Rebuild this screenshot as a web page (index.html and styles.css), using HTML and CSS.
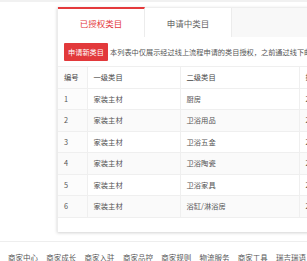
FILE: index.html
```html
<!DOCTYPE html>
<html>
<head>
<meta charset="utf-8">
<link rel="stylesheet" href="styles.css">
</head>
<body>
<div class="topband"></div>
<div class="panel">
  <div class="tabs">
    <div class="tab active">已授权类目</div>
    <div class="tab">申请中类目</div>
    <div class="tab-rest"></div>
  </div>
  <div class="toolbar">
    <span class="btn">申请新类目</span>
    <span class="note">本列表中仅展示经过线上流程申请的类目授权，之前通过线下邮寄资料申请的类目授权请联系招商</span>
  </div>
  <table class="grid">
    <colgroup><col class="c1"><col class="c2"><col class="c3"><col class="c4"></colgroup>
    <thead>
      <tr><th>编号</th><th>一级类目</th><th>二级类目</th><th>授权时间</th></tr>
    </thead>
    <tbody>
      <tr><td>1</td><td>家装主材</td><td>厨房</td><td>2016-06-01</td></tr>
      <tr><td>2</td><td>家装主材</td><td>卫浴用品</td><td>2016-06-01</td></tr>
      <tr><td>3</td><td>家装主材</td><td>卫浴五金</td><td>2016-06-01</td></tr>
      <tr><td>4</td><td>家装主材</td><td>卫浴陶瓷</td><td>2016-06-01</td></tr>
      <tr><td>5</td><td>家装主材</td><td>卫浴家具</td><td>2016-06-01</td></tr>
      <tr><td>6</td><td>家装主材</td><td>浴缸/淋浴房</td><td>2016-06-01</td></tr>
    </tbody>
  </table>
  <div class="panel-foot"></div>
</div>
<div class="footer">
  <span>商家中心</span><span>商家成长</span><span>商家入驻</span><span>商家品控</span><span>商家规则</span><span>物流服务</span><span>商家工具</span><span>瑞吉瑞语</span>
</div>
</body>
</html>
```

FILE: styles.css
```css
html, body {
  margin: 0;
  padding: 0;
  background: #fff;
  overflow: hidden;
  width: 307px;
  height: 261px;
  font-family: "Noto Sans CJK SC", "Noto Sans", sans-serif;
}
.topband {
  height: 2px;
  background: #f1f1f1;
}
.panel {
  margin: 5px 0 0 57px;
  width: 320px;
  background: #fff;
  border-left: 1px solid #ececec;
  box-shadow: 0 1px 3px rgba(0,0,0,0.18);
}
.tabs {
  display: flex;
  height: 29px;
  background: #f8f8f8;
  border-top: 1px solid #eee;
}
.tab {
  width: 87px;
  display: flex;
  align-items: center;
  justify-content: center;
  background: #fff;
  font-size: 8.5px;
  color: #666;
  border-right: 1px solid #ececec;
  box-sizing: border-box;
}
.tab.active {
  color: #e4393c;
  border-top: 2px solid #e4393c;
  margin-top: -1px;
}
.tab-rest { flex: 1; }
.toolbar {
  display: flex;
  align-items: center;
  gap: 2px;
  padding: 6px 0 0 6px;
  height: 18px;
  white-space: nowrap;
  overflow: hidden;
}
.btn {
  display: inline-flex;
  align-items: center;
  justify-content: center;
  width: 44px;
  height: 18px;
  background: #e2393b;
  color: #fff;
  font-size: 7.2px;
  border-radius: 1px;
  flex: none;
}
.note {
  font-size: 7.2px;
  color: #555;
}
.grid {
  margin-top: 5px;
  border-collapse: collapse;
  table-layout: fixed;
  width: 320px;
  font-size: 7.3px;
  color: #555;
}
.c1 { width: 29px; }
.c2 { width: 93px; }
.c3 { width: 119px; }
.c4 { width: 79px; }
.grid th, .grid td {
  height: 21.5px;
  padding: 0 0 0 6px;
  text-align: left;
  font-weight: normal;
  border-top: 1px solid #efefef;
  border-bottom: 1px solid #efefef;
  border-right: 1px solid #efefef;
  white-space: nowrap;
  overflow: hidden;
  box-sizing: border-box;
}
.grid th { color: #444; }
.grid tbody tr:nth-child(even) td { background: #fafafa; }
.grid td:first-child, .grid th:first-child { background: #fcfcfc; }
.panel-foot { height: 14px; }
.footer {
  margin-top: 9px;
  border-top: 1px solid #eee;
  display: flex;
  gap: 8.3px;
  padding: 10px 0 0 8px;
  font-size: 7.5px;
  color: #555;
  white-space: nowrap;
}
```
